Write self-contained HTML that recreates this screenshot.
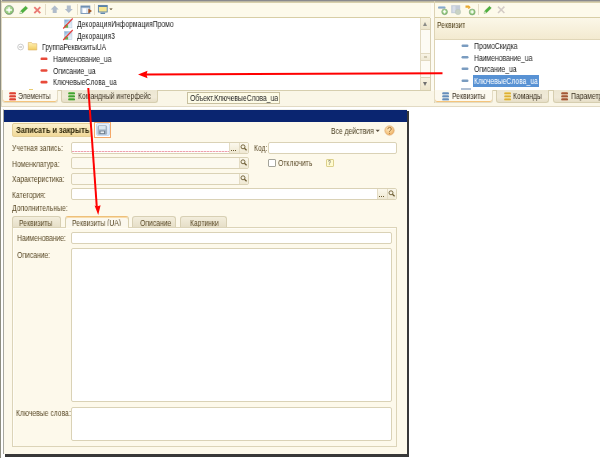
<!DOCTYPE html>
<html><head><meta charset="utf-8">
<style>
*{margin:0;padding:0;box-sizing:border-box}
html,body{width:600px;height:458px;overflow:hidden;background:#fff}
body{position:relative;-webkit-font-smoothing:antialiased;font-family:"Liberation Sans",sans-serif;font-size:8px;color:#1c1c1c}
.a{position:absolute}
.t{position:absolute;will-change:transform;white-space:nowrap;line-height:10px;height:10px;font-size:8.6px;transform:scaleX(.79);transform-origin:0 0}
.lbl{color:#5c4c2a}
.sep{position:absolute;width:1px;height:12px;background:#e0d8c0;top:3px}
.fld{position:absolute;background:#fff;border:1px solid #dad2b6;border-radius:2px}
.fldc{background:#fcf9ef}
.btn2{position:absolute;top:0;bottom:0;width:10px;background:linear-gradient(#fbf7ea,#ece4cc);border-left:1px solid #e0d8c0}
.tab{position:absolute;border:1px solid #d8d0b4;border-bottom:none;border-radius:3px 3px 0 0;background:linear-gradient(#f3eedc,#e6dfc8)}
.tabact{background:#fbf8ee;border-color:#e6c896}
.btab{position:absolute;border:1px solid #d6ceb0;border-top:none;border-radius:0 0 3px 3px;background:linear-gradient(#ece6d2,#f0ead8 60%,#e6dec6)}
.btabact{position:absolute;border:1px solid #e4dcc4;border-top:none;border-radius:0 0 3px 3px;background:#fcf9ef;box-shadow:inset 0 -1px 0 #f4c47c}
</style></head><body>

<!-- ===== TOP CHROME ===== -->
<div class="a" style="left:0;top:0;width:600px;height:107px;background:#faf6e7"></div>
<div class="a" style="left:0;top:0;width:600px;height:1px;background:#8a8a8e"></div>
<div class="a" style="left:0;top:0;width:1px;height:458px;background:#8e8e80"></div>
<div class="a" style="left:1px;top:0;width:1px;height:107px;background:#e0dac4"></div>
<div class="a" style="left:1px;top:1px;width:599px;height:1px;background:#bdb8a2"></div>
<div class="a" style="left:1px;top:2px;width:599px;height:1px;background:#d8d0ac"></div>

<!-- left toolbar -->
<div class="a" style="left:2px;top:3px;width:428px;height:15px;background:#fdfaeb;border-bottom:1px solid #d8cea6"></div>
<!-- left white tree -->
<div class="a" style="left:2px;top:18px;width:418px;height:72px;background:#fff"></div>
<!-- scrollbar -->
<div class="a" style="left:420px;top:18px;width:11px;height:73px;background:#fdfbf4;border-left:1px solid #e2dac2;border-right:1px solid #d8cfb2"></div>
<div class="a" style="left:421px;top:18px;width:9px;height:12px;background:linear-gradient(#f8f3e2,#ede5cc);border-bottom:1px solid #ddd4b8"></div>
<div class="a" style="left:421px;top:53px;width:9px;height:8px;background:linear-gradient(#f8f4e6,#efe9d4);border-top:1px solid #e2dac2;border-bottom:1px solid #e2dac2"></div>
<div class="a" style="left:424px;top:56px;width:3px;height:2px;border-top:1px solid #d0c8b0;border-bottom:1px solid #d0c8b0"></div>
<div class="a" style="left:421px;top:77px;width:9px;height:13px;background:linear-gradient(#f8f3e2,#ede5cc);border-top:1px solid #ddd4b8"></div>
<div class="a" style="left:423px;top:21.5px;width:0;height:0;border-left:2px solid transparent;border-right:2px solid transparent;border-bottom:4px solid #8c8c88"></div>
<div class="a" style="left:423px;top:82px;width:0;height:0;border-left:2px solid transparent;border-right:2px solid transparent;border-top:4px solid #707070"></div>
<!-- splitter -->
<div class="a" style="left:431px;top:3px;width:3px;height:88px;background:#fdfbf2"></div>
<div class="a" style="left:434px;top:1px;width:1px;height:102px;background:#ddd3b4"></div>

<!-- right toolbar -->
<div class="a" style="left:435px;top:3px;width:165px;height:15px;background:#fdfaeb;border-bottom:1px solid #d8cea6"></div>
<!-- right header -->
<div class="a" style="left:435px;top:18px;width:165px;height:22px;background:linear-gradient(#fbf7e8,#f3ead0);border-bottom:1px solid #e0d6b8"></div>
<div class="t" style="left:437px;top:19.5px;color:#4f3f18">Реквизит</div>
<!-- right white -->
<div class="a" style="left:435px;top:40px;width:165px;height:50px;background:#fff"></div>


<!-- left toolbar icons -->
<svg class="a" style="left:0;top:0" width="130" height="18" viewBox="0 0 130 18">
 <defs>
  <radialGradient id="gg" cx="45%" cy="40%" r="65%"><stop offset="0" stop-color="#d4eec4"/><stop offset="0.7" stop-color="#90c878"/><stop offset="1" stop-color="#6aa85a"/></radialGradient>
 </defs>
 <circle cx="9.1" cy="10" r="4.5" fill="url(#gg)" stroke="#8a9a88" stroke-width="0.7"/>
 <path d="M9.1 7.2v5.6M6.3 10h5.6" stroke="#fff" stroke-width="1.3"/>
 <path d="M19.8 13.6l0.8-2.6 5-4.8 2 2-5 4.8z" fill="#4cb23c" stroke="#3a8a2a" stroke-width="0.4"/>
 <path d="M19.8 13.6l0.8-2.6 1.8 1.8z" fill="#e8eed8"/>
 <path d="M34.3 7.2l6 6M40.3 7.2l-6 6" stroke="#ea7a74" stroke-width="1.9"/>
 <path d="M45.5 4v11" stroke="#e4dcc6" stroke-width="1"/>
 <path d="M54.7 5.5l-4 4h2v3.6h4v-3.6h2z" fill="#b0bccb"/>
 <path d="M68.8 13l-4-4h2v-3.6h4v3.6h2z" fill="#b0bccb"/>
 <path d="M77.5 4v11" stroke="#e4dcc6" stroke-width="1"/>
 <rect x="81" y="6" width="8.8" height="7.4" fill="#dce6f2" stroke="#6f8fb2" stroke-width="0.9"/>
 <rect x="81" y="6" width="8.8" height="1.6" fill="#6f8fb2"/>
 <rect x="83" y="8.5" width="3" height="4.5" fill="#fff"/>
 <path d="M88.3 8.6l3.7 2.4-3.7 2.4z" fill="#a0501e"/>
 <path d="M94.5 4v11" stroke="#e4dcc6" stroke-width="1"/>
 <rect x="98.4" y="5.4" width="8.8" height="6.6" fill="#f6e690" stroke="#5a82a8" stroke-width="0.9"/>
 <rect x="98.4" y="5.4" width="8.8" height="1.6" fill="#5a82a8"/>
 <path d="M100.5 13.3h4.6" stroke="#5a82a8" stroke-width="1.3"/>
 <path d="M109.3 8.4h3.4l-1.7 1.6z" fill="#4a3a1a"/>
</svg>

<!-- left tree -->
<svg class="a" style="left:62px;top:17px" width="12" height="25" viewBox="0 0 12 25">
 <defs><linearGradient id="pg" x1="0" y1="0" x2="0.6" y2="1"><stop offset="0" stop-color="#6a9ed4"/><stop offset="0.5" stop-color="#c8dcf0"/><stop offset="1" stop-color="#e8f0f8"/></linearGradient></defs>
 <rect x="2.3" y="2.8" width="7.6" height="8" fill="url(#pg)" stroke="#b8cce0" stroke-width="0.6"/>
 <path d="M2.6 8.5l2-1.5 1.5 1.5v2.2h-3.5z" fill="#6ab04a"/>
 <path d="M1.2 11.5L10.7 1.5" stroke="#e83a3a" stroke-width="1.1"/>
 <rect x="2.3" y="14.3" width="7.6" height="8.2" fill="url(#pg)" stroke="#b8cce0" stroke-width="0.6"/>
 <path d="M2.6 20.2l2-1.5 1.5 1.5v2.2h-3.5z" fill="#6ab04a"/>
 <path d="M1.2 23L10.7 13" stroke="#e83a3a" stroke-width="1.1"/>
</svg>
<div class="t" style="left:77px;top:19px">ДекорацияИнформацияПромо</div>
<div class="t" style="left:77px;top:31px">Декорация3</div>
<svg class="a" style="left:16px;top:41px" width="22" height="11" viewBox="0 0 22 11">
 <defs><linearGradient id="fg" x1="0" y1="0" x2="0" y2="1"><stop offset="0" stop-color="#fff2b8"/><stop offset="1" stop-color="#f2cc60"/></linearGradient></defs>
 <circle cx="4.6" cy="6" r="2.9" fill="#fff" stroke="#b8b8b8" stroke-width="0.7"/>
 <path d="M3.2 6h2.8" stroke="#999" stroke-width="0.8"/>
 <path d="M12.3 1.5h3.2l1 1.2h4.3v6.3h-8.5z" fill="url(#fg)" stroke="#dcb468" stroke-width="0.6"/>
</svg>
<div class="t" style="left:42px;top:42px">ГруппаРеквизитыUA</div>
<svg class="a" style="left:40px;top:55px" width="9" height="30" viewBox="0 0 9 30">
 <rect x="0.5" y="2.5" width="7" height="2.6" rx="1.2" fill="#e84a3a"/>
 <rect x="0.5" y="14.2" width="7" height="2.6" rx="1.2" fill="#e84a3a"/>
 <rect x="0.5" y="25.8" width="7" height="2.6" rx="1.2" fill="#e84a3a"/>
</svg>
<div class="t" style="left:53px;top:54px">Наименование_ua</div>
<div class="t" style="left:53px;top:65.5px">Описание_ua</div>
<div class="t" style="left:53px;top:77px">КлючевыеСлова_ua</div>

<!-- left tabs -->
<div class="a" style="left:2px;top:90px;width:429px;height:1px;background:#d6ceae"></div>
<div class="btabact" style="left:2px;top:90px;width:56px;height:13px"></div>
<svg class="a" style="left:9px;top:92px" width="8" height="10" viewBox="0 0 8 10"><defs><linearGradient id="db1" x1="0" y1="0" x2="0" y2="1"><stop offset="0" stop-color="#f08070"/><stop offset="0.5" stop-color="#d83a2a"/><stop offset="1" stop-color="#f07060"/></linearGradient></defs><rect x="0.2" y="0" width="6.8" height="2.6" rx="1.2" fill="url(#db1)"/><rect x="0.2" y="3" width="6.8" height="2.6" rx="1.2" fill="url(#db1)"/><rect x="0.2" y="6" width="6.8" height="2.6" rx="1.2" fill="url(#db1)"/></svg>
<div class="t" style="left:18px;top:91px;color:#3a3020">Элементы</div>
<div class="btab" style="left:61px;top:90px;width:97px;height:13px"></div>
<svg class="a" style="left:68px;top:92px" width="8" height="10" viewBox="0 0 8 10"><defs><linearGradient id="db2" x1="0" y1="0" x2="0" y2="1"><stop offset="0" stop-color="#8ad070"/><stop offset="0.5" stop-color="#3a9a2a"/><stop offset="1" stop-color="#7ac060"/></linearGradient></defs><rect x="0.2" y="0" width="6.8" height="2.6" rx="1.2" fill="url(#db2)"/><rect x="0.2" y="3" width="6.8" height="2.6" rx="1.2" fill="url(#db2)"/><rect x="0.2" y="6" width="6.8" height="2.6" rx="1.2" fill="url(#db2)"/></svg>
<div class="t" style="left:78px;top:91px;color:#3a3020">Командный интерфейс</div>

<!-- tooltip -->
<div class="a" style="left:187px;top:92px;width:93px;height:12px;background:#fdfbe6;border:1px solid #c8c0a0"></div>
<div class="t" style="left:190px;top:93px;color:#222">Объект.КлючевыеСлова_ua</div>

<!-- right toolbar icons -->
<svg class="a" style="left:0;top:0" width="600" height="18" viewBox="0 0 600 18">
 <defs>
  <radialGradient id="gg2" cx="45%" cy="40%" r="65%"><stop offset="0" stop-color="#d0ecc0"/><stop offset="0.75" stop-color="#86c46e"/><stop offset="1" stop-color="#6aa85a"/></radialGradient>
  <linearGradient id="bd" x1="0" y1="0" x2="0" y2="1"><stop offset="0" stop-color="#a8c4e0"/><stop offset="1" stop-color="#6a90b8"/></linearGradient>
 </defs>
 <rect x="438" y="6.2" width="7.5" height="2.4" rx="1.2" fill="url(#bd)"/>
 <circle cx="444.6" cy="11.8" r="2.9" fill="url(#gg2)" stroke="#7a9a78" stroke-width="0.5"/>
 <path d="M444.6 10.2v3.2M443 11.8h3.2" stroke="#fff" stroke-width="1"/>
 <rect x="451.2" y="5.2" width="9" height="8" fill="#c4ccd8"/>
 <rect x="452.5" y="6.2" width="3" height="6" fill="#d8dee8"/>
 <circle cx="458" cy="12" r="2.7" fill="#c8d2c4" stroke="#b8c4b4" stroke-width="0.4"/>
 <path d="M465.5 5.4h3.4l1.8 1.8-1.8 1.8h-1.2l1.2-1.2h-3.4z" fill="#e8a830"/>
 <circle cx="472.2" cy="12" r="3" fill="url(#gg2)" stroke="#7a9a78" stroke-width="0.5"/>
 <path d="M472.2 10.4v3.2M470.6 12h3.2" stroke="#fff" stroke-width="1"/>
 <path d="M478.5 4v11" stroke="#e4dcc6" stroke-width="1"/>
 <path d="M484 13.3l0.7-2.4 4.8-4.6 1.8 1.8-4.8 4.6z" fill="#4cb23c" stroke="#3a8a2a" stroke-width="0.4"/>
 <path d="M484 13.3l0.7-2.4 1.7 1.7z" fill="#e8eed8"/>
 <path d="M498 6.6l6.4 6.4M504.4 6.6l-6.4 6.4" stroke="#d4ccc6" stroke-width="1.5"/>
</svg>

<!-- right tree -->
<svg class="a" style="left:461px;top:43px" width="9" height="44" viewBox="0 0 9 44">
 <rect x="0.5" y="1.5" width="7" height="2.4" rx="1.2" fill="#7a9cc0"/>
 <rect x="0.5" y="13" width="7" height="2.4" rx="1.2" fill="#7a9cc0"/>
 <rect x="0.5" y="24.5" width="7" height="2.4" rx="1.2" fill="#7a9cc0"/>
 <rect x="0.5" y="36.5" width="7" height="2.4" rx="1.2" fill="#7a9cc0"/>
</svg>
<div class="t" style="left:474px;top:41px">ПромоСкидка</div>
<div class="t" style="left:474px;top:52.5px">Наименование_ua</div>
<div class="t" style="left:474px;top:64px">Описание_ua</div>
<div class="a" style="left:473px;top:75px;width:66px;height:12px;background:#5892d4"></div>
<div class="a" style="left:461px;top:88px;width:10px;height:2px;background:#b0c0d4"></div>
<div class="a" style="left:29px;top:88.5px;width:4px;height:1.5px;background:#e8cc70"></div>
<div class="t" style="left:474px;top:75.5px;color:#fff">КлючевыеСлова_ua</div>

<!-- right tabs -->
<div class="a" style="left:434px;top:90px;width:166px;height:1px;background:#d6ceae"></div>
<div class="btabact" style="left:434px;top:90px;width:59px;height:13px"></div>
<svg class="a" style="left:442px;top:92px" width="8" height="10" viewBox="0 0 8 10"><defs><linearGradient id="db3" x1="0" y1="0" x2="0" y2="1"><stop offset="0" stop-color="#a0bcd8"/><stop offset="0.5" stop-color="#6088b4"/><stop offset="1" stop-color="#90b0d0"/></linearGradient></defs><rect x="0.2" y="0" width="6.8" height="2.6" rx="1.2" fill="url(#db3)"/><rect x="0.2" y="3" width="6.8" height="2.6" rx="1.2" fill="url(#db3)"/><rect x="0.2" y="6" width="6.8" height="2.6" rx="1.2" fill="url(#db3)"/></svg>
<div class="t" style="left:452px;top:91px;color:#3a3020">Реквизиты</div>
<div class="btab" style="left:496px;top:90px;width:53px;height:13px"></div>
<svg class="a" style="left:504px;top:92px" width="8" height="10" viewBox="0 0 8 10"><defs><linearGradient id="db4" x1="0" y1="0" x2="0" y2="1"><stop offset="0" stop-color="#f8e080"/><stop offset="0.5" stop-color="#d8a830"/><stop offset="1" stop-color="#f0d060"/></linearGradient></defs><rect x="0.2" y="0" width="6.8" height="2.6" rx="1.2" fill="url(#db4)"/><rect x="0.2" y="3" width="6.8" height="2.6" rx="1.2" fill="url(#db4)"/><rect x="0.2" y="6" width="6.8" height="2.6" rx="1.2" fill="url(#db4)"/></svg>
<div class="t" style="left:513px;top:91px;color:#3a3020">Команды</div>
<div class="btab" style="left:553px;top:90px;width:52px;height:13px"></div>
<svg class="a" style="left:561px;top:92px" width="8" height="10" viewBox="0 0 8 10"><defs><linearGradient id="db5" x1="0" y1="0" x2="0" y2="1"><stop offset="0" stop-color="#d09070"/><stop offset="0.5" stop-color="#9a5030"/><stop offset="1" stop-color="#c08060"/></linearGradient></defs><rect x="0.2" y="0" width="6.8" height="2.6" rx="1.2" fill="url(#db5)"/><rect x="0.2" y="3" width="6.8" height="2.6" rx="1.2" fill="url(#db5)"/><rect x="0.2" y="6" width="6.8" height="2.6" rx="1.2" fill="url(#db5)"/></svg>
<div class="t" style="left:571px;top:91px;color:#3a3020">Параметры</div>

<!-- bottom line of chrome -->
<div class="a" style="left:1px;top:106px;width:599px;height:1px;background:#e2dac4"></div>

<!-- ===== FORM WINDOW ===== -->
<div class="a" style="left:5px;top:111px;width:404px;height:345.5px;background:#383838"></div>
<div class="a" style="left:3px;top:109px;width:404px;height:345px;background:#fdf9eb;border-left:1px solid #a8a8a0;border-top:1px solid #f0f0ea"></div>
<div class="a" style="left:4px;top:110px;width:403px;height:12px;background:#0a2570"></div>


<!-- form toolbar -->
<div class="a" style="left:12px;top:123px;width:80px;height:14px;border:1px solid #e4cf98;border-radius:2px;background:linear-gradient(#fbf0cc,#f0d898)"></div>
<div class="t" style="left:16px;top:126px;font-weight:bold;font-size:8.2px;color:#2e2608;transform:scaleX(.905)">Записать и закрыть</div>
<div class="a" style="left:94px;top:121.5px;width:17px;height:16px;border:1px solid #f4a868;background:#fff"></div>
<div class="a" style="left:95.5px;top:123px;width:14px;height:13px;border:1px solid #c8dcf4;border-radius:2px;background:linear-gradient(#eaf2fc,#d8e6f8)"></div>
<svg class="a" style="left:97px;top:125px" width="11" height="10" viewBox="0 0 11 10">
 <rect x="0.5" y="0.3" width="9.6" height="9.4" rx="1.5" fill="#a4b4c4"/>
 <rect x="2" y="1" width="6.6" height="3.4" fill="#dce8f0"/>
 <rect x="2.5" y="5.8" width="5.6" height="3.2" fill="#6a7a8a"/>
 <rect x="3.5" y="6.4" width="3.6" height="1.8" fill="#e8eef4"/>
</svg>
<div class="t" style="left:331px;top:126px;color:#4a3f22">Все действия</div>
<svg class="a" style="left:0;top:0" width="600" height="140" viewBox="0 0 600 140">
 <defs><radialGradient id="hg" cx="40%" cy="35%" r="70%"><stop offset="0" stop-color="#fde8c0"/><stop offset="0.7" stop-color="#f4c27c"/><stop offset="1" stop-color="#e8a45a"/></radialGradient></defs>
 <path d="M375.6 129.8h4.2l-2.1 2.2z" fill="#5a5040"/>
 <circle cx="389.5" cy="130.5" r="4.7" fill="url(#hg)" stroke="#dca870" stroke-width="0.6"/>
 <path d="M387.8 129.2q0-1.8 1.8-1.8t1.7 1.6q0 1-1 1.5t-0.7 1.3" fill="none" stroke="#9a6a30" stroke-width="0.9"/>
 <circle cx="389.6" cy="133.2" r="0.55" fill="#9a6a30"/>
</svg>

<!-- fields -->
<div class="t lbl" style="left:12px;top:143px">Учетная запись:</div>
<div class="t lbl" style="left:12px;top:158.5px">Номенклатура:</div>
<div class="t lbl" style="left:12px;top:174px">Характеристика:</div>
<div class="t lbl" style="left:12px;top:190px">Категория:</div>
<div class="t lbl" style="left:12px;top:203px">Дополнительные:</div>

<div class="fld" style="left:71px;top:142px;width:178px;height:12px"></div>
<div class="a" style="left:72px;top:150.5px;width:157px;height:1.5px;background:repeating-linear-gradient(90deg,#eea0ac 0 2px,#f8d4da 2px 3px)"></div>
<div class="fld fldc" style="left:71px;top:157px;width:178px;height:12px"></div>
<div class="fld fldc" style="left:71px;top:172.5px;width:178px;height:12px"></div>
<div class="fld" style="left:71px;top:188px;width:326px;height:12px"></div>

<div class="fld" style="left:268px;top:142px;width:129px;height:12px"></div>
<div class="t lbl" style="left:254px;top:143px">Код:</div>

<div class="a" style="left:268px;top:159px;width:8px;height:8px;border:1px solid #a4a49a;border-radius:1px;background:#fff"></div>
<div class="t lbl" style="left:278px;top:158px">Отключить</div>
<div class="a" style="left:326px;top:159px;width:8px;height:8px;border:1px solid #dcd08c;background:#fffbd0;border-radius:1px"></div>
<div class="t" style="left:328px;top:158px;font-size:6.5px;color:#333">?</div>

<!-- form tabs -->
<div class="tab" style="left:12px;top:216px;width:49px;height:11px"></div>
<div class="t lbl" style="left:19px;top:217.5px">Реквизиты</div>
<div class="tab tabact" style="left:65px;top:216px;width:64px;height:12px;border-color:#d8d0b0;border-top:1px solid #eec07a;box-shadow:inset 0 1px 0 #f8dcaa"></div>
<div class="t lbl" style="left:72px;top:217.5px">Реквизиты (UA)</div>
<div class="tab" style="left:132px;top:216px;width:44px;height:11px"></div>
<div class="t lbl" style="left:140px;top:217.5px">Описание</div>
<div class="tab" style="left:180px;top:216px;width:47px;height:11px"></div>
<div class="t lbl" style="left:190px;top:217.5px">Картинки</div>

<!-- tab panel -->
<div class="a" style="left:12px;top:227px;width:385px;height:220px;border:1px solid #dcd4b8;box-shadow:inset 1px 1px 0 #fffdf6;background:#fdf9eb"></div>
<div class="a" style="left:66px;top:226px;width:62px;height:2px;background:#fdf9eb"></div>
<div class="t lbl" style="left:17px;top:233px">Наименование:</div>
<div class="fld" style="left:71px;top:232px;width:321px;height:12px"></div>
<div class="t lbl" style="left:17px;top:250px">Описание:</div>
<div class="fld" style="left:71px;top:248px;width:321px;height:154px"></div>
<div class="t lbl" style="left:16px;top:408px">Ключевые слова:</div>
<div class="fld" style="left:71px;top:407px;width:321px;height:34px"></div>

<!-- search buttons -->
<div class="a" style="left:229px;top:143px;width:10px;height:10px;background:linear-gradient(#fbf8ec,#efe8d2);border-left:1px solid #e4dcc4"></div><div class="a" style="left:231px;top:150.0px;width:6px;height:1px;background:repeating-linear-gradient(90deg,#6a5a30 0 1px,transparent 1px 2px)"></div><div class="a" style="left:239px;top:143px;width:9px;height:10px;background:linear-gradient(#fbf8ec,#efe8d2);border-left:1px solid #e4dcc4;border-radius:0 2px 2px 0"></div><svg class="a" style="left:240px;top:144px" width="8" height="8" viewBox="0 0 8 8"><circle cx="3" cy="2.8" r="2" fill="none" stroke="#6a5a30" stroke-width="0.9"/><path d="M4.4 4.2l2.2 2" stroke="#6a5a30" stroke-width="1.3"/></svg><div class="a" style="left:239px;top:158px;width:9px;height:10px;background:linear-gradient(#fbf8ec,#efe8d2);border-left:1px solid #e4dcc4;border-radius:0 2px 2px 0"></div><svg class="a" style="left:240px;top:159px" width="8" height="8" viewBox="0 0 8 8"><circle cx="3" cy="2.8" r="2" fill="none" stroke="#6a5a30" stroke-width="0.9"/><path d="M4.4 4.2l2.2 2" stroke="#6a5a30" stroke-width="1.3"/></svg><div class="a" style="left:239px;top:173.5px;width:9px;height:10px;background:linear-gradient(#fbf8ec,#efe8d2);border-left:1px solid #e4dcc4;border-radius:0 2px 2px 0"></div><svg class="a" style="left:240px;top:174.5px" width="8" height="8" viewBox="0 0 8 8"><circle cx="3" cy="2.8" r="2" fill="none" stroke="#6a5a30" stroke-width="0.9"/><path d="M4.4 4.2l2.2 2" stroke="#6a5a30" stroke-width="1.3"/></svg><div class="a" style="left:377px;top:189px;width:10px;height:10px;background:linear-gradient(#fbf8ec,#efe8d2);border-left:1px solid #e4dcc4"></div><div class="a" style="left:379px;top:196.0px;width:6px;height:1px;background:repeating-linear-gradient(90deg,#6a5a30 0 1px,transparent 1px 2px)"></div><div class="a" style="left:387px;top:189px;width:9px;height:10px;background:linear-gradient(#fbf8ec,#efe8d2);border-left:1px solid #e4dcc4;border-radius:0 2px 2px 0"></div><svg class="a" style="left:388px;top:190px" width="8" height="8" viewBox="0 0 8 8"><circle cx="3" cy="2.8" r="2" fill="none" stroke="#6a5a30" stroke-width="0.9"/><path d="M4.4 4.2l2.2 2" stroke="#6a5a30" stroke-width="1.3"/></svg>

<!-- red arrows -->
<svg class="a" style="left:0;top:0" width="600" height="458" viewBox="0 0 600 458">
 <path d="M442.5 73.2L146 74.6" stroke="#f00" stroke-width="2" fill="none"/>
 <path d="M138 74.6L147.5 70.8L146.5 74.6L147.5 78.2z" fill="#f00"/>
 <path d="M88.3 88L96.8 207" stroke="#f00" stroke-width="2" fill="none"/>
 <path d="M98.2 215L94.6 205.5L97 206.5L100.6 205.2z" fill="#f00"/>
</svg>

</body></html>
